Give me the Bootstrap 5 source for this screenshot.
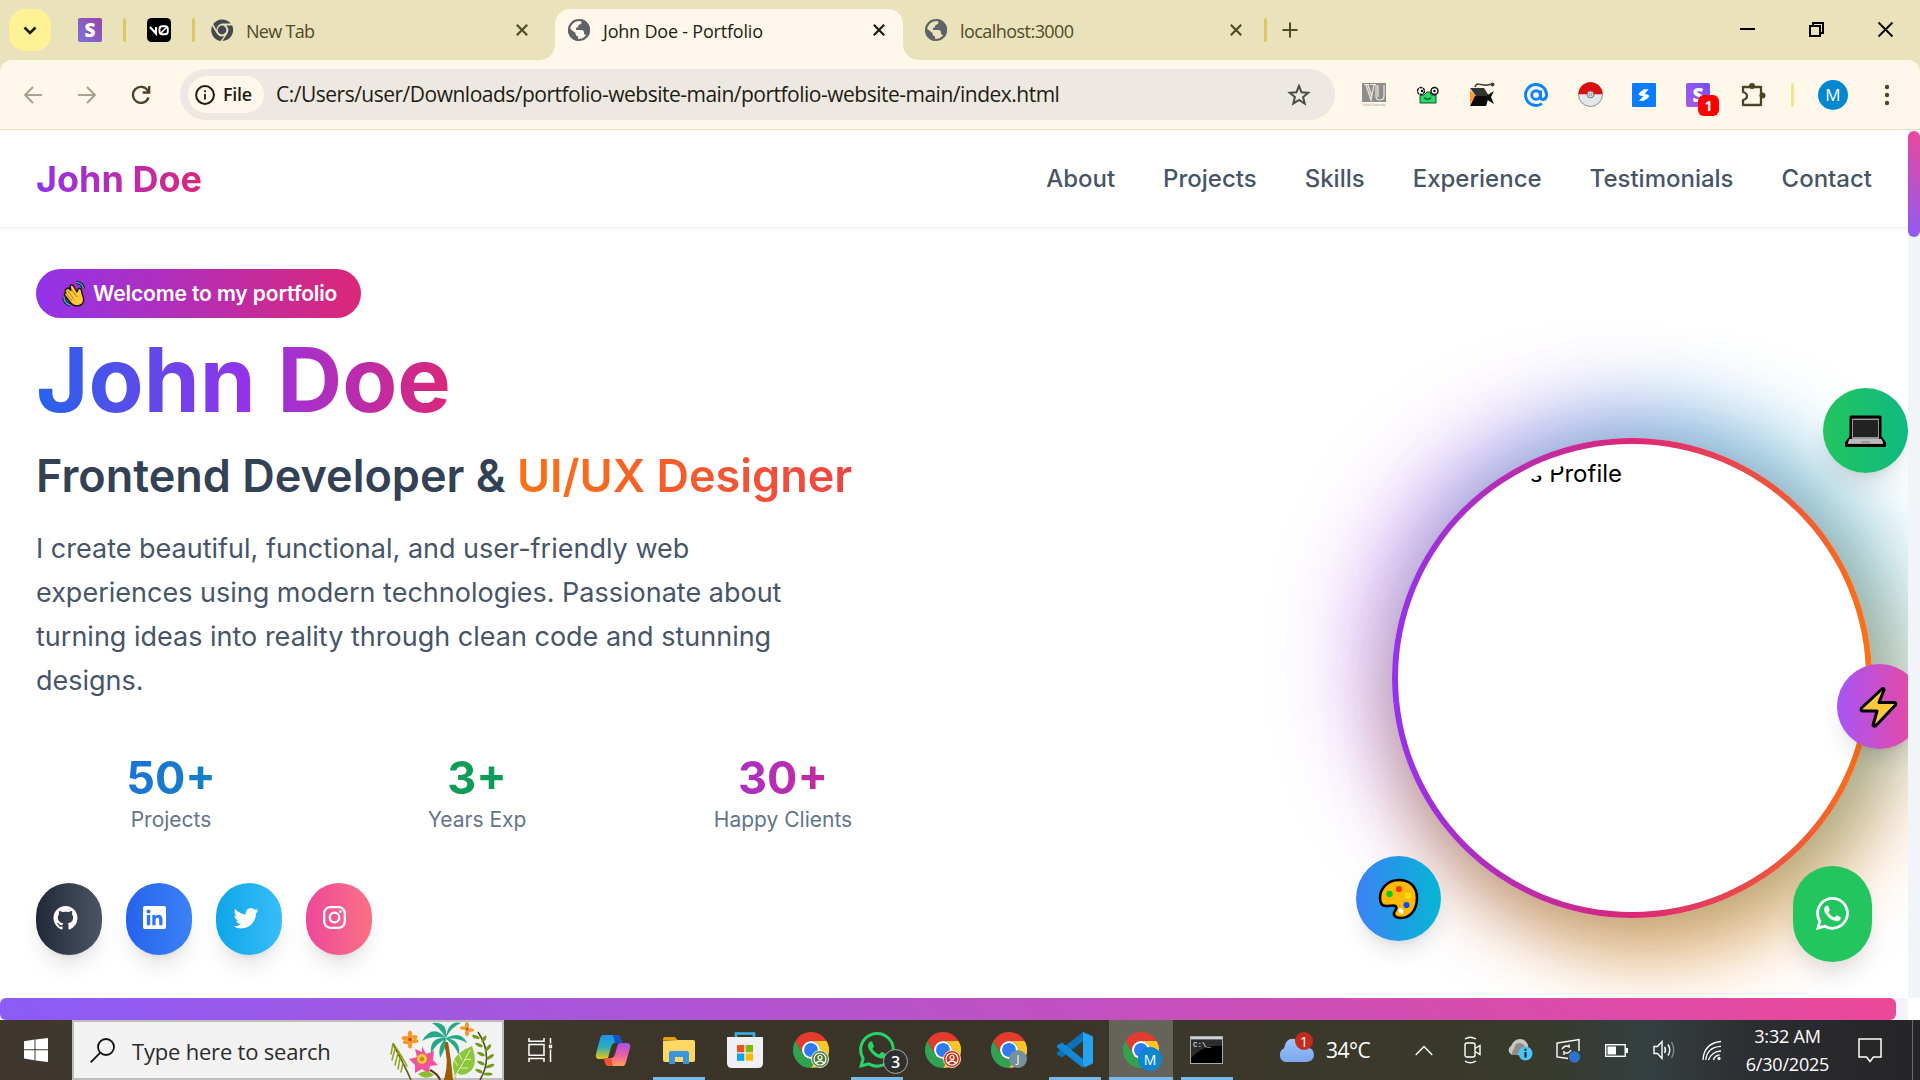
<!DOCTYPE html>
<html lang="en">
<head>
<meta charset="utf-8">
<title>John Doe - Portfolio</title>
<link href="https://cdn.jsdelivr.net/npm/bootstrap@5.3.0/dist/css/bootstrap.min.css" rel="stylesheet">
<style>
body{width:1920px;height:1080px;overflow:hidden;background:#fff;font-family:Inter,"Liberation Sans",sans-serif}
svg{display:block;flex:none;overflow:visible}
.ui{font-family:"Open Sans","Noto Sans",sans-serif}
.cell{display:flex;align-items:center;justify-content:center;flex:none}
/* browser frame */
.strip{height:60px;background:#eae2bb}
.chev{width:42px;height:42px;margin:9px 6px 0 9px;border-radius:16px;background:#fff196}
.pin{width:66px;height:60px}
.vsep{width:3px;height:24px;border-radius:2px;background:#d8ca63;flex:none}
.tab-item{height:51px;margin-top:9px;padding-bottom:9px;font-size:18px;color:#4f4a2a;gap:12px;position:relative;flex:none}
.tab-item span{line-height:24px;padding-top:2px;white-space:nowrap}
.tab-on{background:#fff8ea;border-radius:15px 15px 0 0;color:#1e1c11}
.tab-on::before,.tab-on::after{content:"";position:absolute;bottom:0;width:15px;height:15px}
.tab-on::before{left:-15px;background:radial-gradient(circle at 0 0,transparent 14.5px,#fff8ea 15px)}
.tab-on::after{right:-15px;background:radial-gradient(circle at 100% 0,transparent 14.5px,#fff8ea 15px)}
.win{width:69px;height:58px}
.toolwrap{background:#eae2bb;height:70px}
.tools{height:70px;background:#fff8ea;border-radius:12px 12px 0 0;border-bottom:1px solid #e3dcc0;padding:9px 6px}
.tbtn{width:54px;height:51px}
.omni{width:1155px;height:51px;border-radius:26px;background:#ede8e1;margin-left:12px;padding:0 24px 0 8px}
.chip{width:76px;height:37px;border-radius:19px;background:#fff8ea;padding-left:7px;gap:8px;font-size:18px;font-weight:600;letter-spacing:-.3px;color:#1e1c11}
.url{margin-left:12px;font-size:21px;color:#1e1c11;white-space:nowrap;letter-spacing:-.5px}
.ext{position:relative}
.extbadge{position:absolute;left:27px;top:26px;width:21px;height:21px;border-radius:6px;background:#f00;color:#fff;font-size:14px;font-weight:700;line-height:21px;text-align:center}
.avatar{width:30px;height:30px;border-radius:50%;background:#0288d1;color:#fff;font-size:17px}
/* page */
.view{height:890px}
.site{width:1908px;height:868px;overflow:hidden;position:relative}
.site-head{height:98px;padding:0 36px;border-bottom:1px solid #eeedfb;box-shadow:0 2px 4px rgba(0,0,0,.04)}
.brand{font-size:36px;font-weight:700;line-height:48px;background:linear-gradient(90deg,#9333ea,#db2777);-webkit-background-clip:text;background-clip:text;color:transparent}
.menu{gap:48px;font-size:24px;font-weight:500;color:#475569}
.hero{padding:41px 36px 0}
.hero-l{width:882px}
.pill{height:49px;width:325px;border-radius:25px;background:linear-gradient(90deg,#9333ea,#db2777);color:#fff;font-size:21px;font-weight:600;letter-spacing:-.12px;padding-left:26px;gap:7px;white-space:nowrap}
.gtext{-webkit-background-clip:text;background-clip:text;color:transparent}
.name{font-size:90px;line-height:90px;font-weight:700;margin:17px 0 0}
.name span{background-image:linear-gradient(90deg,#2563eb,#9333ea,#db2777);display:inline-block}
.role{font-size:45px;line-height:54px;font-weight:600;color:#334155;margin:24px 0 0;white-space:nowrap}
.role span{background-image:linear-gradient(90deg,#f97316,#ef4444)}
.bio{font-size:27px;line-height:43.875px;color:#475569;margin:24px 0 0;white-space:nowrap}
.stats{gap:36px;margin-top:48px;text-align:center}
.stats>div{width:270px}
.num{font-size:45px;line-height:53px;font-weight:700}
.lab{font-size:21px;line-height:31.5px;color:#64748b}
.social{gap:24px;margin-top:48px}
.soc{width:66px;height:72px;border-radius:33px;padding:0 0 3px 17px;box-shadow:0 15px 22px -4px rgba(0,0,0,.1),0 6px 9px -6px rgba(0,0,0,.1)}
.ring{width:480px;height:480px;margin:169px 0 0 auto;border-radius:50%;padding:6px;background:linear-gradient(90deg,#9333ea,#db2777,#f97316);position:relative;
box-shadow:8px 42px 80px -10px rgba(234,179,8,.34),0 37px 75px -18px rgba(0,0,0,.16),34px -26px 80px rgba(6,182,212,.42),-32px -20px 90px rgba(155,50,225,.42),38px 36px 80px rgba(249,115,22,.34)}
.disc{width:468px;height:468px;border-radius:50%;background:#fff;padding:11px}
.photo{width:446px;height:446px;border-radius:50%;overflow:hidden;padding-top:1px;font-size:24px;line-height:36px;color:#000;white-space:nowrap}
.photo span{display:block;width:213px;text-align:right}
.orb{position:absolute;width:85px;height:85px;border-radius:50%;box-shadow:0 15px 22px -4px rgba(0,0,0,.1),0 6px 9px -6px rgba(0,0,0,.1)}
.wa{position:absolute;left:1793px;top:736px;width:79px;height:96px;border-radius:40px;background:#22c55e;box-shadow:0 15px 22px -4px rgba(0,0,0,.12);padding-bottom:2px}
.hbar{height:22px;width:1908px;background:#f1f5f9}
.hthumb{height:22px;width:1896px;border-radius:6px;background:linear-gradient(45deg,#8b5cf6,#ec4899)}
.vbar{width:12px;height:868px;background:#f1f5f9;padding-top:1px}
.vthumb{height:106px;border-radius:6px;background:linear-gradient(45deg,#8b5cf6,#ec4899)}
/* taskbar */
.task{height:60px;background:linear-gradient(90deg,#403830 0,#3d382b 500px,#3a3328 900px,#3b382a 1250px,#383a2c 1540px,#353f41 1645px,#2b2d30 1760px,#252427 1920px);color:#fff}
.find{width:432px;height:60px;flex:none;background:#f2f2f2;border:2px solid #bdbdbd;padding-left:16px;position:relative;font-size:22px;color:#2b2b2b}
.app{width:66px;height:60px;position:relative}
.run::after{content:"";position:absolute;left:7px;right:7px;bottom:0;height:3px;background:#76b9ed}
.appon{background:#66645a;width:64px;margin:0 1px}
.appon::after{left:0;right:0}
.bdg{position:absolute;border-radius:50%;display:flex;align-items:center;justify-content:center;color:#fff}
.tray{width:48px;height:60px}
.clock{width:103px;flex:none;font-size:18px;line-height:28px;text-align:center;white-space:nowrap;letter-spacing:-.2px}
</style>
<script src="https://cdn.jsdelivr.net/npm/bootstrap@5.3.0/dist/js/bootstrap.bundle.min.js"></script>
</head>
<body>
<svg width="0" height="0" style="position:absolute">
<defs>
<symbol id="globe" viewBox="0 0 24 24"><circle cx="12" cy="12" r="10" fill="var(--land)" stroke="#5f6368" stroke-width="2.200"/><path d="M12 1a11 11 0 0 1 11 11q0 4-2.500 7-1.500-2.500-3.500-3 .5-3.500-2-4H9v-2.300q2.500.3 2.500-3 3 0 3-2.500V2zM1.600 9.500l6.900 5.500q-.2 3 2.500 3.200V23Q2 21.500 1.200 13z" fill="#5f6368"/></symbol>
<symbol id="x" viewBox="0 0 12 12"><path d="M.8.8l10.400 10.400M11.200.8L.8 11.200" stroke="currentColor" stroke-width="2.200"/></symbol>
<symbol id="chrome" viewBox="0 0 48 48"><path d="M3.200 12A24 24 0 0 1 44.800 12H24A12 12 0 0 0 13.600 30Z" fill="#e33b2e"/><path d="M44.800 12A24 24 0 0 1 24 48L34.400 30A12 12 0 0 0 24 12Z" fill="#fcc629"/><path d="M3.200 12L13.600 30A12 12 0 0 0 34.400 30L24 48A24 24 0 0 1 3.200 12Z" fill="#31a350"/><circle cx="24" cy="24" r="12" fill="#fff"/><circle cx="24" cy="24" r="9.300" fill="#2f7cf0"/></symbol>
<symbol id="whats" viewBox="0 0 16 16"><path d="M13.601 2.326A7.854 7.854 0 0 0 7.994 0C3.627 0 .068 3.558.064 7.926c0 1.399.366 2.760 1.057 3.965L0 16l4.204-1.102a7.933 7.933 0 0 0 3.790.965h.004c4.368 0 7.926-3.558 7.930-7.930A7.898 7.898 0 0 0 13.600 2.326zM7.994 14.521a6.573 6.573 0 0 1-3.356-.92l-.24-.144-2.494.654.666-2.433-.156-.251a6.560 6.560 0 0 1-1.007-3.505c0-3.626 2.957-6.584 6.591-6.584a6.560 6.560 0 0 1 4.660 1.931 6.557 6.557 0 0 1 1.928 4.660c-.004 3.639-2.961 6.592-6.592 6.592zm3.615-4.934c-.197-.099-1.170-.578-1.353-.646-.182-.065-.315-.099-.445.099-.133.197-.513.646-.627.775-.114.133-.232.148-.43.050-.197-.1-.836-.308-1.592-.985-.59-.525-.985-1.175-1.103-1.372-.114-.198-.011-.304.088-.403.087-.088.197-.232.296-.346.100-.114.133-.198.198-.330.065-.134.034-.248-.015-.347-.050-.099-.445-1.076-.612-1.470-.16-.389-.323-.335-.445-.340-.114-.007-.247-.007-.380-.007a.729.729 0 0 0-.529.247c-.182.198-.691.677-.691 1.654 0 .977.710 1.916.810 2.049.098.133 1.394 2.132 3.383 2.992.470.205.840.326 1.129.418.475.152.904.129 1.246.080.380-.058 1.171-.480 1.338-.943.164-.464.164-.860.114-.943-.049-.084-.182-.133-.380-.232z" fill="currentColor"/></symbol>
<linearGradient id="cpA" x1="0" y1="0" x2="0" y2="1"><stop offset="0" stop-color="#1d8ff0"/><stop offset=".5" stop-color="#2bb0b8"/><stop offset="1" stop-color="#f1c40f"/></linearGradient>
<linearGradient id="cpB" x1="0" y1="0" x2="0" y2="1"><stop offset="0" stop-color="#a650ee"/><stop offset=".55" stop-color="#f0609c"/><stop offset="1" stop-color="#ffa05a"/></linearGradient>
<linearGradient id="cl" x1="0" y1="0" x2="0" y2="1"><stop offset="0" stop-color="#9cc4fb"/><stop offset="1" stop-color="#7aa7ee"/></linearGradient>
<linearGradient id="sg" x1="0" y1="1" x2="1" y2="0"><stop offset="0" stop-color="#7c74d6"/><stop offset="1" stop-color="#9a41a8"/></linearGradient>
<linearGradient id="sh" x1="0" y1="1" x2="1" y2="0"><stop offset="0" stop-color="#ac5ce2"/><stop offset="1" stop-color="#6f4fff"/></linearGradient>
</defs></svg>

<!-- tab strip -->
<div class="strip d-flex ui">
  <div class="chev cell"><svg width="14" height="9" viewBox="0 0 14 9"><path d="M1.500 1.500L7 7l5.500-5.500" fill="none" stroke="#1e1c11" stroke-width="2.600"/></svg></div>
  <div class="pin cell"><svg width="24" height="24" viewBox="0 0 24 24"><rect width="24" height="24" rx="2" fill="url(#sg)"/><text x="12" y="19" text-anchor="middle" font-family="Open Sans" font-weight="800" font-size="19" fill="#fff">S</text></svg></div>
  <div class="vsep align-self-center"></div>
  <div class="pin cell"><svg width="24" height="24" viewBox="0 0 24 24"><rect width="24" height="24" rx="4.500" fill="#000"/><path d="M3 9l6 6.500V9" fill="none" stroke="#fff" stroke-width="2.100"/><rect x="12.500" y="8.300" width="8.300" height="8" rx="2.800" fill="none" stroke="#fff" stroke-width="1.900"/><path d="M19.500 9.500l-6 5.800" stroke="#fff" stroke-width="1.600"/></svg></div>
  <div class="vsep align-self-center"></div>
  <div class="tab-item d-flex align-items-center" style="width:360px;padding-left:15px;padding-right:27px">
    <svg width="24" height="24" viewBox="-2 -2 52 52"><path d="M5 11A24 24 0 0 1 43 10H24A14 14 0 0 0 12 24ZM46 14A24 24 0 0 1 25 48L36 31A14 14 0 0 0 33 14ZM2.500 15L13 32A14 14 0 0 0 29 37L21 48A24 24 0 0 1 2.500 15Z" fill="#45484c"/><circle cx="24" cy="24" r="9.500" fill="#45484c"/></svg>
    <span class="flex-grow-1" style="letter-spacing:-.7px">New Tab</span><svg width="12" height="12"><use href="#x"/></svg></div>
  <div class="tab-item tab-on d-flex align-items-center" style="width:348px;padding-left:12px;padding-right:18px">
    <svg width="24" height="24" style="--land:#fff8ea"><use href="#globe"/></svg>
    <span class="flex-grow-1" style="letter-spacing:-.2px">John Doe - Portfolio</span><svg width="12" height="12"><use href="#x"/></svg></div>
  <div class="tab-item d-flex align-items-center" style="width:361px;padding-left:21px;padding-right:22px">
    <svg width="24" height="24" style="--land:#eae2bb"><use href="#globe"/></svg>
    <span class="flex-grow-1" style="letter-spacing:-.55px">localhost:3000</span><svg width="12" height="12"><use href="#x"/></svg></div>
  <div class="vsep align-self-center"></div>
  <div class="cell" style="width:46px"><svg width="16" height="16" viewBox="0 0 16 16"><path d="M8 .5v15M.5 8h15" stroke="#4f4a2a" stroke-width="2"/></svg></div>
  <div class="d-flex ms-auto">
    <div class="win cell"><svg width="15" height="2"><rect width="15" height="2"/></svg></div>
    <div class="win cell"><svg width="15" height="15" viewBox="0 0 15 15" fill="none" stroke="#000" stroke-width="2"><path d="M1 4h10v10H1zM4 4V1h10v10h-3"/></svg></div>
    <div class="win cell"><svg width="15" height="15" viewBox="0 0 15 15"><path d="M.5.5l14 14M14.500.5l-14 14" stroke="#000" stroke-width="1.800"/></svg></div>
  </div>
</div>
<!-- toolbar -->
<div class="toolwrap ui"><div class="tools d-flex align-items-center">
  <div class="tbtn cell"><svg width="18" height="18" viewBox="0 0 18 18" fill="none" stroke="#a8a391" stroke-width="2"><path d="M18 9H1.500M9 1L1 9l8 8"/></svg></div>
  <div class="tbtn cell"><svg width="18" height="18" viewBox="0 0 18 18" fill="none" stroke="#a8a391" stroke-width="2"><path d="M0 9h16.500M9 1l8 8-8 8"/></svg></div>
  <div class="tbtn cell"><svg width="20" height="20" viewBox="0 0 20 20" fill="none" stroke="#4a4527" stroke-width="2.300"><path d="M17.500 12.500A8 8 0 1 1 16.500 5.200L18 7M18.200 1v6.500h-6.500"/></svg></div>
  <div class="omni d-flex align-items-center">
    <div class="chip d-flex align-items-center"><svg width="20" height="20" viewBox="0 0 20 20"><circle cx="10" cy="10" r="8.900" fill="none" stroke="#1e1c11" stroke-width="2"/><path d="M10 9v5.500M10 5.300v2" stroke="#1e1c11" stroke-width="1.800"/></svg>File</div>
    <div class="url flex-grow-1">C:/Users/user/Downloads/portfolio-website-main/portfolio-website-main/index.html</div>
    <svg width="24" height="24" viewBox="0 0 24 24"><path d="M12 3l2.500 6.200 6.700.5-5.100 4.300 1.600 6.500L12 17l-5.700 3.500 1.600-6.500-5.100-4.300 6.700-.5z" fill="none" stroke="#4a4a42" stroke-width="2"/></svg>
  </div>
  <div class="d-flex" style="margin-left:12px">
    <div class="tbtn cell"><svg width="24" height="24" viewBox="0 0 24 24"><rect width="24" height="19" fill="#8d8d8b"/><path d="M2 1.500h5M8 1.500h6M4 2l5 15L12 2M6 2l4 12M14 2v11q0 4 4 4t4-4V2M16 2v12" fill="none" stroke="#f0ead8" stroke-width="1.200"/><text x="0.500" y="23" font-size="4" fill="#8d8d8b" textLength="23" lengthAdjust="spacingAndGlyphs">Virtual University</text></svg></div>
    <div class="tbtn cell"><svg width="24" height="24" viewBox="0 0 24 24"><path d="M4 20V12h4l3-3h3l1 3h5v8z" fill="#2bd96b" stroke="#184d2b" stroke-width="1"/><circle cx="5" cy="8" r="3.500" fill="#fff" stroke="#111" stroke-width="1.500" stroke-dasharray="3 .6"/><circle cx="18.500" cy="8" r="3.500" fill="#fff" stroke="#111" stroke-width="1.500"/><circle cx="6" cy="8" r="1.200"/><circle cx="18.500" cy="8" r="1.200"/><path d="M8 14.500q4 3.500 7 0" fill="none" stroke="#0e5527" stroke-width="1.300"/></svg></div>
    <div class="tbtn cell"><svg width="26" height="25" viewBox="0 0 26 25"><path d="M1 8l6 6-6 8z" fill="#ff9a2e"/><path d="M6 14h14l-3 10H1z" fill="#0a0a0a"/><path d="M1 6h14l5 8H7z" fill="#333"/><path d="M17 14l8-5-3 6 3 7-8-5z" fill="#111"/><path d="M6 5C8-2 13 6 23 2" fill="none" stroke="#444" stroke-width="1.600"/><circle cx="23.500" cy="2.500" r="2" fill="#444"/></svg></div>
    <div class="tbtn cell"><svg width="26" height="26" viewBox="0 0 26 26"><g fill="none" stroke="#0a84ff" stroke-width="2.900"><circle cx="13" cy="13" r="4.300"/><path d="M17.500 8.500v6q0 3 2.500 3t3.500-3.500a10.500 10.500 0 1 0-4.500 7.600"/></g></svg></div>
    <div class="tbtn cell"><svg width="25" height="25" viewBox="0 0 25 25"><circle cx="12.500" cy="12.500" r="12" fill="#dfe9ec" stroke="#777" stroke-width=".8"/><path d="M.5 12.300a12 12 0 0 1 24 0z" fill="#dc0d0d"/><circle cx="12.500" cy="12.500" r="3.400" fill="#ddd" stroke="#777"/><circle cx="12.500" cy="12.500" r="1.300" fill="#fff" stroke="#777" stroke-width=".8"/></svg></div>
    <div class="tbtn cell"><svg width="24" height="24" viewBox="0 0 24 24"><rect width="24" height="24" rx="1" fill="#0a7cff"/><path d="M16 6.500h-4L8 9.500c-1.500 1.500-1 2.800.8 3l3.200.6-4.500 4.400h4l4.500-2.700c1.500-1.500.8-2.900-.8-3.100l-3-.5z" fill="#fff" stroke="#fff" stroke-width=".6"/></svg></div>
    <div class="tbtn cell ext"><svg width="24" height="24" viewBox="0 0 24 24"><rect width="24" height="24" rx="2" fill="url(#sh)"/><text x="12" y="19" text-anchor="middle" font-family="Open Sans" font-weight="800" font-size="19" fill="#fff">S</text></svg><div class="extbadge">1</div></div>
    <div class="tbtn cell"><svg width="26" height="26" viewBox="0 0 26 26"><path d="M4 5h18v18H4v-5q4-1 4-4t-4-4z" fill="none" stroke="#4a4527" stroke-width="2.300" stroke-linejoin="round"/><circle cx="13" cy="4" r="3" fill="#4a4527"/><circle cx="23.500" cy="13.500" r="3" fill="#4a4527"/></svg></div>
  </div>
  <div class="vsep" style="margin-left:12px;background:#f2e488"></div>
  <div class="avatar cell" style="margin-left:24px">M</div>
  <div class="tbtn cell" style="margin-left:12px"><svg width="6" height="22" fill="#4a4527"><circle cx="3" cy="3" r="2.200"/><circle cx="3" cy="11" r="2.200"/><circle cx="3" cy="19" r="2.200"/></svg></div>
</div></div>

<!-- page -->
<div class="view d-flex">
  <div>
    <div class="site">
      <header class="site-head d-flex align-items-center justify-content-between">
        <div class="brand">John Doe</div>
        <nav class="menu d-flex"><span>About</span><span>Projects</span><span>Skills</span><span>Experience</span><span>Testimonials</span><span>Contact</span></nav>
      </header>
      <main class="hero d-flex">
        <div class="hero-l">
          <div class="pill d-flex align-items-center">
            <svg width="24" height="26" viewBox="0 0 24 26"><path d="M14 1.500q6 0 7.500 6M2 16q0 6 6 8" fill="none" stroke="#111" stroke-width="3.200"/><path d="M14 1.500q6 0 7.500 6M2 16q0 6 6 8" fill="none" stroke="#2bb3c0" stroke-width="1.600"/><path d="M4.500 8q1.500-2 3 0L9 9.500 8 5q1.500-2.500 3.500 0L15 11l1-3q2.500-1.500 3.500 1.500.5 4 2 7.500c1 5-2 7.500-6 8-4 0-6-1.500-8-4.500L2.500 14q-.5-2 1.500-2l-1-2q0-1.500 1.500-2z" fill="#ffc83d" stroke="#1a1206" stroke-width="1.400" stroke-linejoin="round"/><path d="M5.500 9.500l6.500 9M9 8l6 8M4.500 13l5.500 7" stroke="#b47c14" stroke-width="1"/></svg>
            <span>Welcome to my portfolio</span></div>
          <h1 class="name"><span class="gtext">John Doe</span></h1>
          <h2 class="role">Frontend Developer &amp; <span class="gtext">UI/UX Designer</span></h2>
          <p class="bio">I create beautiful, functional, and user-friendly web<br>experiences using modern technologies. Passionate about<br>turning ideas into reality through clean code and stunning<br>designs.</p>
          <div class="stats d-flex">
            <div><div class="num gtext" style="background-image:linear-gradient(90deg,#2563eb,#0891b2)">50+</div><div class="lab">Projects</div></div>
            <div><div class="num gtext" style="background-image:linear-gradient(90deg,#16a34a,#059669)">3+</div><div class="lab">Years Exp</div></div>
            <div><div class="num gtext" style="background-image:linear-gradient(90deg,#9333ea,#db2777)">30+</div><div class="lab">Happy Clients</div></div>
          </div>
          <div class="social d-flex">
            <div class="soc d-flex align-items-center" style="background:linear-gradient(90deg,#1f2937,#4b5563)"><svg width="25" height="24" viewBox="0 0 16 16"><path fill="#fff" d="M8 0C3.580 0 0 3.580 0 8c0 3.540 2.290 6.530 5.470 7.590.4.070.55-.17.55-.38 0-.19-.01-.82-.01-1.490-2.010.37-2.530-.49-2.690-.94-.09-.23-.48-.94-.82-1.130-.28-.15-.68-.52-.01-.53.63-.01 1.080.58 1.230.82.72 1.210 1.870.87 2.330.66.070-.52.28-.87.51-1.070-1.780-.2-3.640-.89-3.640-3.950 0-.87.31-1.590.82-2.150-.08-.2-.36-1.020.080-2.120 0 0 .67-.21 2.200.82.64-.18 1.320-.27 2-.27.68 0 1.360.09 2 .27 1.530-1.040 2.200-.82 2.200-.82.44 1.100.16 1.920.080 2.120.51.56.82 1.270.82 2.150 0 3.070-1.870 3.750-3.650 3.950.29.25.54.73.54 1.480 0 1.070-.01 1.930-.01 2.200 0 .21.15.46.55.38A8.012 8.012 0 0 0 16 8c0-4.420-3.580-8-8-8z"/></svg></div>
            <div class="soc d-flex align-items-center" style="background:linear-gradient(90deg,#2563eb,#3b82f6)"><svg width="23" height="23" viewBox="0 0 23 23"><rect width="23" height="23" rx="2" fill="#fff"/><g fill="#2f74f1"><circle cx="5.500" cy="5.500" r="2"/><path d="M3.800 9h3.400v10.300H3.800zM9.300 9h3.200v1.500c1.600-2.600 7-2.600 7 3v5.800h-3.300v-5.200c0-3.300-3.600-2.900-3.600 0v5.200H9.300z"/></g></svg></div>
            <div class="soc d-flex align-items-center" style="background:linear-gradient(90deg,#0ea5e9,#38bdf8)"><svg width="26" height="25" viewBox="0 0 16 16"><path fill="#fff" d="M5.026 15c6.038 0 9.341-5.003 9.341-9.334 0-.14 0-.282-.006-.422A6.685 6.685 0 0 0 16 3.542a6.658 6.658 0 0 1-1.889.518 3.301 3.301 0 0 0 1.447-1.817 6.533 6.533 0 0 1-2.087.793A3.286 3.286 0 0 0 7.875 6.030a9.325 9.325 0 0 1-6.767-3.429 3.289 3.289 0 0 0 1.018 4.382A3.323 3.323 0 0 1 .64 6.575v.045a3.288 3.288 0 0 0 2.632 3.218 3.203 3.203 0 0 1-.865.115 3.230 3.230 0 0 1-.614-.057 3.283 3.283 0 0 0 3.067 2.277A6.588 6.588 0 0 1 .78 13.580a6.320 6.320 0 0 1-.78-.045A9.344 9.344 0 0 0 5.026 15z"/></svg></div>
            <div class="soc d-flex align-items-center" style="background:linear-gradient(90deg,#ec4899,#fb7185)"><svg width="23" height="23" viewBox="0 0 23 23" fill="none" stroke="#fff" stroke-width="2.300"><rect x="1.200" y="1.200" width="20.600" height="20.600" rx="6"/><circle cx="11.500" cy="11.500" r="4.800"/><circle cx="17.500" cy="5.600" r=".6" stroke-width="1.600"/></svg></div>
          </div>
        </div>
        <div class="flex-grow-1">
          <div class="ring">
            <div class="disc"><div class="photo"><span>John Doe's Profile</span></div></div>
            <div class="orb cell" style="left:431px;top:-50px;background:linear-gradient(90deg,#22c55e,#10b981)"><svg width="41" height="32" viewBox="0 0 41 32"><path d="M6 2h29v20l4.500 6v2.500h-38V28L6 22z" fill="#999" stroke="#000" stroke-width="3" stroke-linejoin="round"/><path d="M4.500 24h32l2 4.500h-36z" fill="#bbb"/><rect x="7.500" y="4.500" width="26" height="18" fill="#222" stroke="#999" stroke-width="1"/><rect x="16" y="26" width="9" height="2.500" fill="#999"/></svg></div>
            <div class="orb cell" style="left:445px;top:226px;padding-right:3px;background:linear-gradient(90deg,#a855f7,#ec4899)"><svg width="39" height="42" viewBox="0 0 39 42"><path d="M23.500 2.500L2.500 22q-1.500 3 1.500 3h14l-4 14.500q1 1.500 3 0L36.500 19q1-2-1-2.500H20L25 4q0-2-1.500-1.500z" fill="#ffc83d" stroke="#000" stroke-width="3" stroke-linejoin="round"/></svg></div>
            <div class="orb cell" style="left:-36px;top:418px;background:linear-gradient(90deg,#3b82f6,#06b6d4)"><svg width="41" height="42" viewBox="0 0 41 42"><path d="M21 2C9 2 2 11 2 20c0 5 2 8 6 8 5 0 8-1.500 10 .5 2 2.500-3 5-2 8 1 3 4 3.500 7 3.500 9 0 16-8 16-20S31 2 21 2z" fill="#ffb900" stroke="#000" stroke-width="2.600"/><circle cx="11.500" cy="16" r="3.200" fill="#10c81c"/><circle cx="21" cy="11" r="3.100" fill="#f03a17"/><circle cx="30" cy="17.500" r="3.100" fill="#f9e103"/><circle cx="28.500" cy="27" r="3.100" fill="#0a4dff"/><ellipse cx="23" cy="33" rx="2.300" ry="3" fill="#fff" transform="rotate(-25 23 33)"/></svg></div>
          </div>
        </div>
      </main>
      <div class="wa cell text-white"><svg width="33" height="33"><use href="#whats"/></svg></div>
    </div>
    <div class="hbar"><div class="hthumb"></div></div>
  </div>
  <div class="vbar"><div class="vthumb"></div></div>
</div>

<!-- taskbar -->
<div class="task d-flex ui">
  <div class="cell" style="width:72px"><svg width="24" height="24" viewBox="0 0 24 24" fill="#fff"><path d="M0 3.300L10.500 1.600v9.700H0zM11.500 1.400L24 0v11.300H11.500zM0 12.300h10.500v9.900L0 20.600zM11.500 12.300H24V24l-12.500-1.600z"/></svg></div>
  <div class="find d-flex align-items-center"><svg width="25" height="25" viewBox="0 0 25 25" fill="none" stroke="#111" stroke-width="1.800"><circle cx="16" cy="9" r="8"/><path d="M10.300 14.700L.7 24.300"/></svg>
    <span style="margin-left:17px;padding-top:2px;letter-spacing:-.2px">Type here to search</span>
    <svg width="108" height="58" viewBox="0 0 108 58" style="position:absolute;left:314px;top:0">
      <g fill="none" stroke-linecap="round"><path d="M5 22q12 22 18 36" stroke="#6b5a1c" stroke-width="1.600"/><path d="M5 22l-2 10M7 27l-3 11M10 31l-3 12M12 36l-2 11M15 41l-2 9M6 22l5 9M9 27l6 10M13 33l6 11" stroke="#8fa21c" stroke-width="1.500"/></g>
      <path d="M55 20q7 18 1 38h9q-2-22-5-38z" fill="#9a5a08"/>
      <g fill="#26a884"><path d="M57 15Q44 2 34 19q10-6 23-3zM57 16Q41 15 43 32q5-11 15-15zM58 16q-9 8-6 20 6-9 6-20zM58 16Q60-1 44 1q8 5 14 15zM58 16Q60-2 73 1q-10 4-15 15zM58 16q15-8 21 5-10-6-21-4zM58 16q15 2 13 17-5-11-13-16z"/></g>
      <g fill="#f7962a"><ellipse cx="22" cy="13" rx="2.200" ry="4.500"/><ellipse cx="22" cy="22" rx="2.200" ry="4.500"/><ellipse cx="17.500" cy="16" rx="4" ry="2.100"/><ellipse cx="26.500" cy="19" rx="4" ry="2.100"/><ellipse cx="18" cy="20" rx="3.200" ry="2.100"/><ellipse cx="26.500" cy="15" rx="3.200" ry="2.100"/><ellipse cx="79" cy="3.500" rx="2" ry="3.500"/><ellipse cx="79" cy="10.500" rx="2" ry="3.500"/><ellipse cx="75.500" cy="6" rx="3.500" ry="1.800"/><ellipse cx="82.500" cy="8" rx="3.500" ry="1.800"/></g><circle cx="22" cy="17.500" r="1.800" fill="#b94c09"/><circle cx="79" cy="7" r="1.300" fill="#b94c09"/>
      <path d="M34 24l4 8 8-3-1 9 5 5-8 1-1 8-7-5-7 4v-8l-6-6 8-2-2-8 7 3z" fill="#f0559a"/><circle cx="34" cy="37" r="5" fill="#f6c93a"/><circle cx="34" cy="37" r="2.200" fill="#c48a12"/>
      <path d="M30 52q8-6 16 1-8 6-16-1z" fill="#8bbd2f"/><path d="M42 48q8 4 10 10" stroke="#5c3c0c" stroke-width="2" fill="none"/>
      <path d="M66 50Q60 34 84 24q8 22-6 28-6 2-9-1l-2 7" fill="#8cc63a"/><path d="M66 56q10-16 16-28M70 44l-4-6M74 38l-3-6M72 46l8 0M76 38l7-1" fill="none" stroke="#e6f2c8" stroke-width="1"/>
      <path d="M90 10q16 24 2 48" stroke="#4a4a12" stroke-width="1.500" fill="none"/><g fill="#6f9a1c"><ellipse cx="88" cy="15" rx="4" ry="1.600" transform="rotate(20 88 15)"/><ellipse cx="96" cy="17" rx="4" ry="1.600" transform="rotate(-60 96 17)"/><ellipse cx="91" cy="23" rx="4" ry="1.600" transform="rotate(25 91 23)"/><ellipse cx="100" cy="26" rx="4.500" ry="1.600" transform="rotate(-50 100 26)"/><ellipse cx="93" cy="32" rx="4" ry="1.600" transform="rotate(25 93 32)"/><ellipse cx="102" cy="35" rx="4.500" ry="1.600" transform="rotate(-35 102 35)"/><ellipse cx="93" cy="41" rx="4" ry="1.600" transform="rotate(25 93 41)"/><ellipse cx="102" cy="44" rx="4.500" ry="1.600" transform="rotate(-20 102 44)"/><ellipse cx="91" cy="49" rx="4" ry="1.600" transform="rotate(25 91 49)"/><ellipse cx="100" cy="52" rx="4.500" ry="1.600"/></g>
    </svg>
  </div>
  <div class="cell" style="width:72px"><svg width="24" height="24" viewBox="0 0 24 24" fill="none" stroke="#fff" stroke-width="1.500"><path d="M1 0v3.200h15V0M1 24v-3.500h15V24M1 6.500h15v10.800H1zM22.500 0v5.500M22.500 11.500V24"/><rect x="21.600" y="7.500" width="1.800" height="2"/></svg></div>
  <div class="app cell" style="margin-left:4px"><svg width="34" height="31" viewBox="0 0 34 31"><path d="M7 0h14q3 0 4 4l1 4h-7q-3 0-4 4l-3 11q-1 1-4 1H2q-3-1-2-5L4 4q1-4 3-4z" fill="url(#cpA)"/><path d="M17 0h4q3 0 4 4l1 4h-7z" fill="#1550c8"/><path d="M27 31H13q-3 0-4-4l-1-4h7q3 0 4-4l3-10q1-1 4-1h6q3 1 2 5l-4 14q-1 4-3 4z" fill="url(#cpB)"/><path d="M17 31h-4q-3 0-4-4l-1-4h7z" fill="#f0503c"/></svg></div>
  <div class="app cell run"><svg width="32" height="27" viewBox="0 0 32 27"><path d="M0 2q0-2 2-2h10l3 3.500H0z" fill="#e3a008"/><path d="M0 4l15-1h15q2 0 2 2v18q0 2-2 2H2q-2 0-2-2z" fill="#fcd765"/><path d="M6 27V16q0-2 2-2h16q2 0 2 2v11h-6v-7h-8v7z" fill="#3996de"/></svg></div>
  <div class="app cell"><svg width="36" height="36" viewBox="0 0 36 36"><path d="M9 8V1.500h18V8" fill="none" stroke="#35b3ee" stroke-width="2.600"/><path d="M0 5h36v26q0 5-5 5H5q-5 0-5-5z" fill="#f0f0f2"/><path d="M10 13h7.300v7.300H10z" fill="#f25022"/><path d="M18.700 13H26v7.300h-7.300z" fill="#7fba00"/><path d="M10 21.500h7.300v7.300H10z" fill="#00a4ef"/><path d="M18.700 21.500H26v7.300h-7.300z" fill="#ffb900"/></svg></div>
  <div class="app cell"><svg width="36" height="36"><use href="#chrome"/></svg><div class="bdg" style="left:33px;top:30px;width:18px;height:18px;background:#4f7d37;border:1px solid #e6f0da"><svg width="14" height="14" viewBox="0 0 14 14" fill="none" stroke="#fff" stroke-width="1.200"><circle cx="7" cy="7" r="6"/><circle cx="7" cy="5.500" r="2"/><path d="M3 11q4-4 8 0"/></svg></div></div>
  <div class="app cell run" style="color:#25d366"><svg width="36" height="36"><use href="#whats"/></svg><div class="bdg" style="left:39px;top:29px;width:25px;height:25px;background:#303030;border:1px solid #aaa;font-size:16px;font-weight:600">3</div></div>
  <div class="app cell"><svg width="36" height="36"><use href="#chrome"/></svg><div class="bdg" style="left:33px;top:30px;width:18px;height:18px;background:#c8310f;border:1px solid #f6dcd2"><svg width="14" height="14" viewBox="0 0 14 14" fill="none" stroke="#fff" stroke-width="1.200"><circle cx="7" cy="7" r="6"/><circle cx="7" cy="5.500" r="2"/><path d="M3 11q4-4 8 0"/></svg></div></div>
  <div class="app cell"><svg width="36" height="36"><use href="#chrome"/></svg><div class="bdg" style="left:33px;top:30px;width:18px;height:18px;background:#78909c;font-size:11px">J</div></div>
  <div class="app cell run"><svg width="36" height="36" viewBox="0 0 36 36"><path d="M26 0v9L5 25.500 0 22.500v-2L26 0z" fill="#0a72bd"/><path d="M0 13.500l5-3L26 27v9L0 15.500z" fill="#1288d4"/><path d="M26 0l9 4q1 .5 1 2v24q0 1.500-1 2l-9 4q2-1 0-3z" fill="#26a3ef"/></svg></div>
  <div class="app appon cell run"><svg width="36" height="36"><use href="#chrome"/></svg><div class="bdg" style="left:29px;top:27px;width:24px;height:24px;background:#0d86d0;font-size:14px">M</div></div>
  <div class="app cell run" style="padding-right:2px"><svg width="33" height="28" viewBox="0 0 33 28"><rect x=".5" y=".5" width="32" height="27" fill="#000" stroke="#aaa"/><path d="M1 1h31v2.500H1z" fill="#cfd3da"/><path d="M1 22Q14 8 32 10V4H1z" fill="#2c2c2c"/><text x="3" y="11" font-family="Liberation Mono" font-size="7.500" fill="#fff" textLength="18">C:\_</text></svg></div>
  <div class="d-flex align-items-center" style="margin-left:37px"><svg width="37" height="24" viewBox="0 2 37 26" preserveAspectRatio="none"><path d="M8 28a7 8 0 0 1-1-15Q9 2 17 3q8 0 10 9 10 0 10 8 0 7-7 8z" fill="url(#cl)"/></svg></div>
  <div style="width:0;position:relative"><div class="bdg" style="left:-19px;top:12px;width:18px;height:18px;background:#c42b1c;font-size:14px">1</div></div>
  <div class="d-flex align-items-center" style="flex:none;margin-left:12px;padding-top:2px;font-size:21px;width:74px;letter-spacing:-.5px">34°C</div>
  <div class="tray cell"><svg width="18" height="11" viewBox="0 0 18 11"><path d="M.7 10L9 1.500 17.300 10" fill="none" stroke="#fff" stroke-width="1.400"/></svg></div>
  <div class="tray cell"><svg width="17" height="28" viewBox="0 0 17 28" fill="none" stroke="#fff" stroke-width="1.400"><rect x="1" y="7" width="10" height="14" rx="2"/><path d="M11 12.500l5-3v9l-5-3M1 3q5-3.500 11 0M1 25q5 3.500 11 0"/></svg></div>
  <div class="tray cell"><svg width="25" height="22" viewBox="0 0 25 22"><path d="M4 16A5 5 0 0 1 3 7Q6 0 12 0q6 0 8 6 1 5-2 10z" fill="#c9c7c2"/><path d="M8 5q5-3 9 2l-8 9H3z" fill="#8f8d88"/><circle cx="17.500" cy="14.500" r="7" fill="#4fc3f7"/><path d="M17.500 13v5.500M17.500 9.700v2" stroke="#0a1c2c" stroke-width="2"/></svg></div>
  <div class="tray cell"><svg width="25" height="25" viewBox="0 0 25 25"><path d="M12 20.500L1 19V5l22-3.500V13M6 11q3-4.500 7-2V6.500M15 12q-3 5-7 2V17" fill="none" stroke="#fff" stroke-width="1.400"/><circle cx="18.500" cy="19" r="5.700" fill="#2b74c9"/></svg></div>
  <div class="tray cell"><svg width="23" height="13" viewBox="0 0 23 13"><rect x=".7" y=".7" width="19.500" height="11.600" fill="none" stroke="#fff" stroke-width="1.400"/><path d="M2.500 2.500h8.500v8H2.500zM20.500 4H23v5h-2.500z" fill="#fff"/></svg></div>
  <div class="tray cell"><svg width="23" height="20" viewBox="0 0 23 20" fill="none" stroke="#fff" stroke-width="1.400"><path d="M1 6.500h3.500L9 1.500v17l-4.500-5H1zM11.500 7q2 3 0 6M15 4.500q3.500 5.500 0 11"/><path d="M18.500 2q4.500 8 0 16" stroke="#888"/></svg></div>
  <div class="tray cell"><svg width="20" height="21" viewBox="0 0 20 21" fill="none" stroke="#fff" stroke-width="1.300"><path d="M6.500 20A13 13 0 0 1 19 11M1 20Q2 3 19 1.500M3.800 20Q5 7 19 6.300M11.500 20q1-4.500 6-5"/><circle cx="17" cy="18.500" r="1" fill="#fff"/></svg></div>
  <div class="clock d-flex flex-column justify-content-center"><div>3:32 AM</div><div>6/30/2025</div></div>
  <div class="cell" style="width:62px"><svg width="24" height="25" viewBox="0 0 24 25"><path d="M1 1h22v18h-7.500L12 23.500 8.500 19H1z" fill="none" stroke="#fff" stroke-width="1.500"/></svg></div>
  <div style="width:1px;margin-left:11px;background:#6d6d70"></div>
</div>
</body>
</html>
